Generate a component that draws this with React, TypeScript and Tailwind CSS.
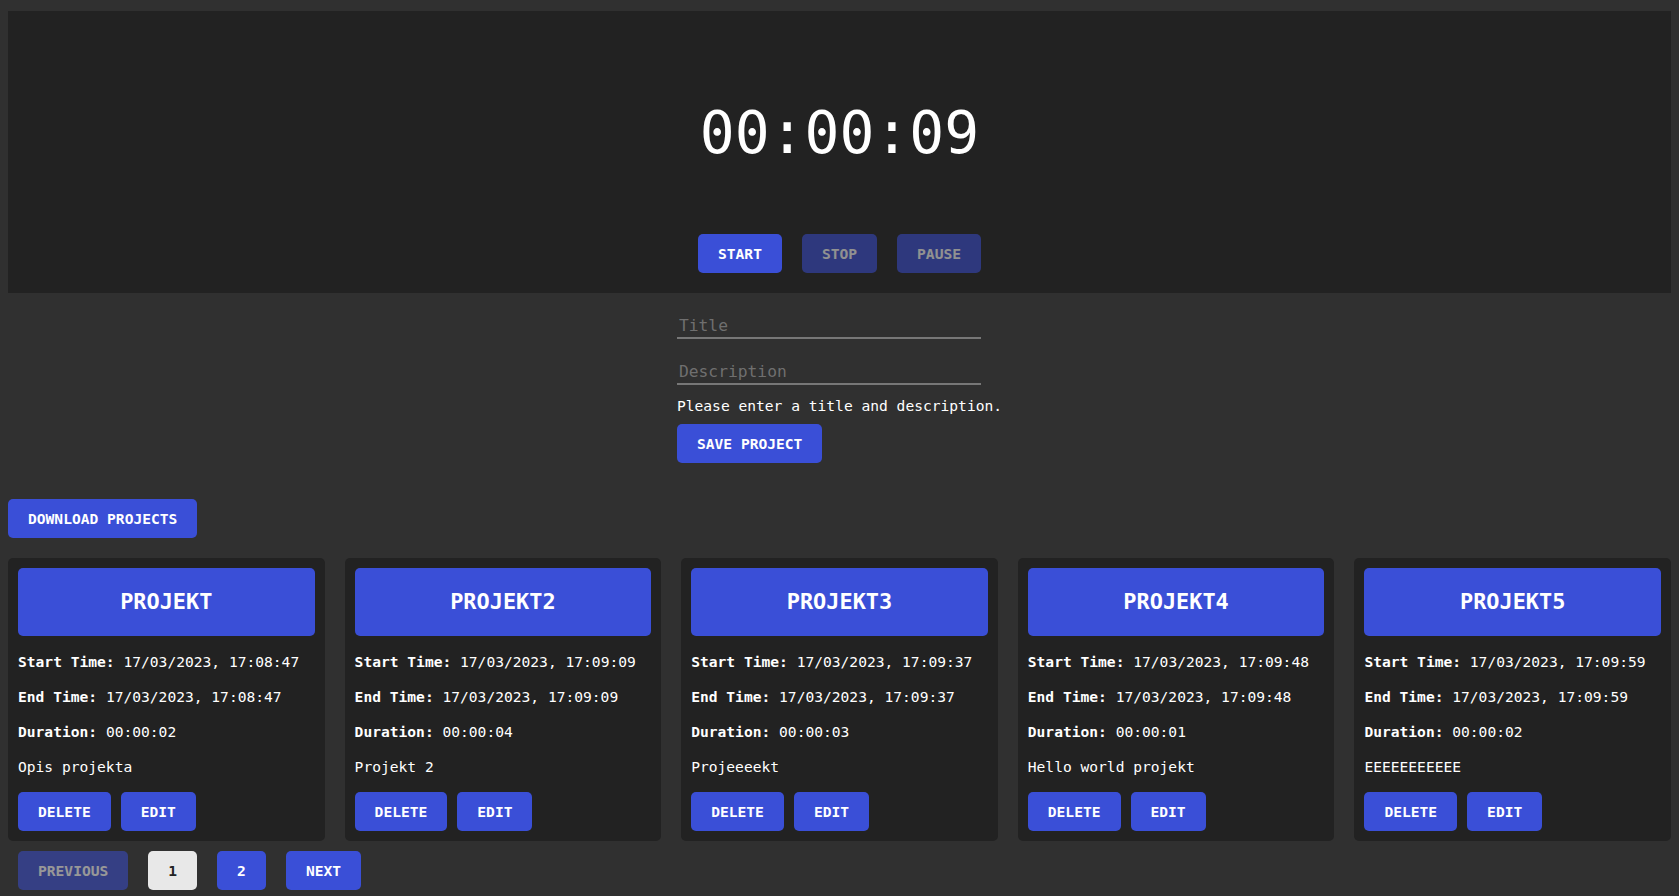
import { clsx } from 'clsx'

const MONO = "font-['DejaVu_Sans_Mono','Liberation_Mono',monospace]"

interface Project {
  title: string
  start: string
  end: string
  duration: string
  description: string
}

const PROJECTS: Project[] = [
  { title: 'PROJEKT', start: '17/03/2023, 17:08:47', end: '17/03/2023, 17:08:47', duration: '00:00:02', description: 'Opis projekta' },
  { title: 'PROJEKT2', start: '17/03/2023, 17:09:09', end: '17/03/2023, 17:09:09', duration: '00:00:04', description: 'Projekt 2' },
  { title: 'PROJEKT3', start: '17/03/2023, 17:09:37', end: '17/03/2023, 17:09:37', duration: '00:00:03', description: 'Projeeeekt' },
  { title: 'PROJEKT4', start: '17/03/2023, 17:09:48', end: '17/03/2023, 17:09:48', duration: '00:00:01', description: 'Hello world projekt' },
  { title: 'PROJEKT5', start: '17/03/2023, 17:09:59', end: '17/03/2023, 17:09:59', duration: '00:00:02', description: 'EEEEEEEEEEE' },
]

function Btn({ children, disabled, light }: { children: React.ReactNode; disabled?: boolean; light?: boolean }) {
  return (
    <button
      className={clsx(
        'h-[39px] px-5 rounded-[5px] text-[14.6px] font-bold leading-[19px] shrink-0',
        light ? 'bg-[#e8e8e8] text-[#222]' : 'bg-[#3a4fd7] text-white',
        disabled && 'opacity-50'
      )}
    >
      {children}
    </button>
  )
}

function ProjectCard({ p }: { p: Project }) {
  return (
    <div className="flex-1 min-w-0 bg-[#222] rounded-[5px] p-[10px]">
      <div className="h-[68px] rounded-[5px] bg-[#3a4fd7] flex items-center justify-center text-white font-bold text-[21.9px]">
        {p.title}
      </div>
      <p className="mt-4 leading-[19px] whitespace-nowrap"><b>Start Time:</b> {p.start}</p>
      <p className="mt-4 leading-[19px] whitespace-nowrap"><b>End Time:</b> {p.end}</p>
      <p className="mt-4 leading-[19px] whitespace-nowrap"><b>Duration:</b> {p.duration}</p>
      <p className="mt-4 leading-[19px] whitespace-nowrap">{p.description}</p>
      <div className="mt-4 flex gap-[10px]">
        <Btn>DELETE</Btn>
        <Btn>EDIT</Btn>
      </div>
    </div>
  )
}

export default function App() {
  return (
    <div className={clsx(MONO, 'min-h-screen bg-[#303030] text-white text-[14.6px] px-2 pt-[11px] pb-[6px]')}>
      {/* Timer */}
      <div className="bg-[#222] h-[282px] flex flex-col items-center pt-[87px]">
        <div className="text-[58px] leading-[70px]">00:00:09</div>
        <div className="mt-[66px] flex gap-5">
          <Btn>START</Btn>
          <Btn disabled>STOP</Btn>
          <Btn disabled>PAUSE</Btn>
        </div>
      </div>

      {/* Form */}
      <div className="flex justify-center">
        <div className="w-fit pt-[19px]">
          <input
            placeholder="Title"
            className="block w-[304px] h-[27px] pt-[2px] bg-transparent border-b-2 border-[#777] px-[2px] outline-none placeholder:text-[#6f6f6f] text-[16.3px]"
          />
          <input
            placeholder="Description"
            className="block mt-[19px] w-[304px] h-[27px] pt-[2px] bg-transparent border-b-2 border-[#777] px-[2px] outline-none placeholder:text-[#6f6f6f] text-[16.3px]"
          />
          <p className="mt-[11px] leading-[19px] whitespace-nowrap">Please enter a title and description.</p>
          <div className="mt-[9px]">
            <Btn>SAVE PROJECT</Btn>
          </div>
        </div>
      </div>

      <div className="mt-[36px]">
        <Btn>DOWNLOAD PROJECTS</Btn>
      </div>

      {/* Projects */}
      <div className="mt-5 flex gap-5">
        {PROJECTS.map(p => (
          <ProjectCard key={p.title} p={p} />
        ))}
      </div>

      {/* Pagination */}
      <div className="mt-[10px] pl-[10px] flex gap-5">
        <Btn disabled>PREVIOUS</Btn>
        <Btn light>1</Btn>
        <Btn>2</Btn>
        <Btn>NEXT</Btn>
      </div>
    </div>
  )
}
